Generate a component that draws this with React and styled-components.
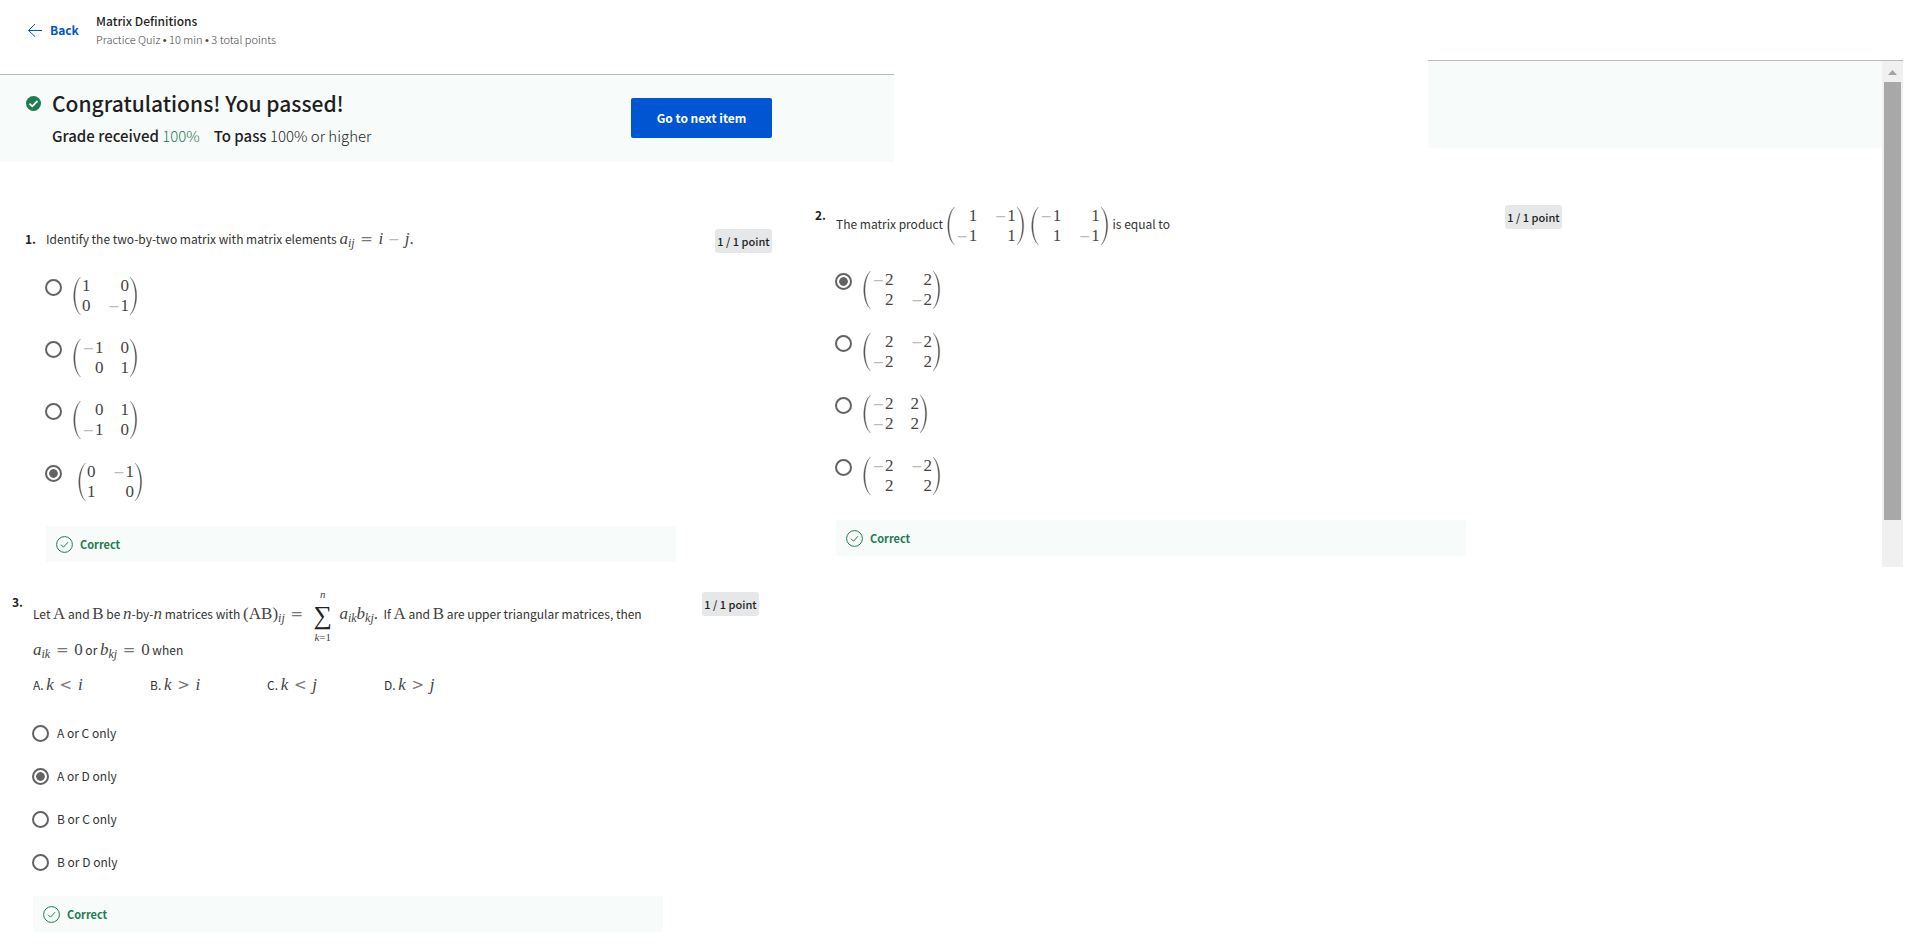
import React from "react";
import styled, { createGlobalStyle } from "styled-components";

const Global = createGlobalStyle`
  *, *::before, *::after { box-sizing: border-box; }
  body { margin: 0; background: #fff; color: #1f1f1f; font-family: "Noto Sans CJK SC", "Noto Sans", sans-serif; font-size: 13px; line-height: 24px; }
  h1, p { margin: 0; font: inherit; }
`;

const Page = styled.div`
  display: flex;
  align-items: flex-start;
  padding-right: 17px;
`;

const Main = styled.main`
  flex: 1;
  min-width: 0;
`;

const TopRow = styled.div`
  display: grid;
  grid-template-columns: 894fr 534fr 454fr;
  align-items: start;
`;

const Header = styled.header`
  display: flex;
  height: 74px;
  padding: 11px 0 0 27px;
`;

const BackLink = styled.a`
  display: flex;
  align-items: center;
  gap: 7px;
  width: 69px;
  height: 37px;
  color: #0056d2;
  font-weight: 700;
  font-size: 12px;
  text-decoration: none;
`;

const QuizTitle = styled.h1`
  font-size: 12px;
  font-weight: 500;
  line-height: 19px;
`;

const QuizMeta = styled.p`
  font-size: 11px;
  font-weight: 300;
  line-height: 18px;
  color: #444;
`;

const Bullet = styled.span`
  font-family: "Liberation Sans", sans-serif;
`;

const Banner = styled.section`
  display: flex;
  align-items: flex-start;
  height: 88px;
  border-top: 1px solid #bababa;
  background: #f7fbfa;
`;

const ResultBanner = styled(Banner)`
  padding: 12px 122px 0 26px;
`;

const TrailingBanner = styled(Banner)`
  grid-column: 3;
  margin-top: 60px;
`;

const BannerText = styled.div`
  flex: 1;
  margin-left: 11px;
`;

const ResultTitle = styled.p`
  font-size: 21px;
  font-weight: 500;
  line-height: 32px;
`;

const GradeLine = styled.p`
  display: flex;
  gap: 14px;
  font-size: 15px;
  font-weight: 300;
  line-height: 34px;
  b { font-weight: 500; }
`;

const Green = styled.span`
  color: #1d7c50;
`;

const ResultIcon = styled.svg`
  flex: none;
  margin-top: 9px;
`;

const NextButton = styled.button`
  width: 141px;
  height: 40px;
  margin-top: 11px;
  padding: 0;
  border: 0;
  border-radius: 2px;
  background: #0056d2;
  color: #fff;
  font: 700 12px/18px "Noto Sans CJK SC", "Noto Sans", sans-serif;
`;

const Questions = styled.div`
  display: grid;
  grid-template-columns: 772fr 790fr 320fr;
  align-items: start;
`;

const LeftColumn = styled.div`
  padding-top: 65px;
`;

const RightColumn = styled.div`
  padding: 41px 0 0 43px;
`;

const QuestionBox = styled.section`
  display: grid;
  grid-template-columns: 21px 1fr 57px;
  margin-left: ${(p) => p.$indent || 0}px;
  & + & { margin: 28px 13px 0 12px; }
`;

const Num = styled.span`
  font-size: 12px;
  font-weight: 700;
`;

const Body = styled.div`
  min-width: 0;
  padding-right: 39px;
  color: #333;
  font-size: 12px;
`;

const Badge = styled.span`
  height: 24px;
  margin-top: 2px;
  border-radius: 3px;
  background: #e5e7e8;
  font-size: 11px;
  font-weight: 500;
  text-align: center;
  white-space: nowrap;
`;

const Line = styled.div`
  height: ${(p) => p.$height || 24}px;
  line-height: ${(p) => p.$height || 24}px;
  white-space: nowrap;
`;

const Choices = styled.div`
  display: grid;
  grid-template-columns: repeat(4, 117px);
  margin-top: 11px;
  white-space: nowrap;
`;

const Options = styled.div`
  display: grid;
  gap: 22px;
  margin-top: 25px;
`;

const Option = styled.label`
  display: flex;
  align-items: flex-start;
  gap: 8px;
  line-height: 21px;
`;

const Radio = styled.input.attrs({ type: "radio" })`
  appearance: none;
  flex: none;
  width: 17px;
  height: 17px;
  margin: 3px 0 0 -1px;
  padding: 2px;
  border: 2px solid #636363;
  border-radius: 50%;
  background-clip: content-box;
  &:checked {
    background-image: radial-gradient(circle, #636363 4px, transparent 5px);
  }
`;

const Feedback = styled.div`
  display: flex;
  align-items: center;
  gap: 7px;
  height: 36px;
  margin-top: 24px;
  padding-left: 10px;
  background: #f7fbfa;
  color: #1d7c50;
  font-size: 11px;
  font-weight: 700;
`;

const Math = styled.span`
  font-family: "Liberation Serif", serif;
  font-size: 17px;
  line-height: 20px;
  color: #444;
  sub { font-size: 12px; line-height: 0; vertical-align: -3px; }
`;

const Minus = styled.span`
  display: inline-block;
  width: 13px;
  text-align: center;
  color: #bbb;
  font: 14px/16px "DejaVu Sans", sans-serif;
`;

const Relation = styled.span`
  display: inline-block;
  width: 24px;
  text-align: center;
  color: #777;
  font: 15px/16px "DejaVu Sans", sans-serif;
`;

const MatrixBox = styled(Math)`
  display: inline-flex;
  align-items: center;
  vertical-align: middle;
  height: 40px;
  margin-left: ${(p) => (p.$lead ? 5 : 0)}px;
`;

const PromptMatrices = styled.span`
  margin: 0 -2px;
`;

const Cells = styled.span`
  display: grid;
  grid-template-columns: auto auto;
  column-gap: 17px;
  text-align: right;
`;

const SumBox = styled(Math)`
  display: inline-flex;
  flex-direction: column;
  align-items: center;
  vertical-align: middle;
  width: 26px;
  margin: -4px 1px;
  font-size: 11px;
  line-height: 13px;
`;

const SumSign = styled.span`
  color: #222;
  font-size: 26px;
  line-height: 30px;
`;

const ScrollTrack = styled.div`
  flex: none;
  width: 21px;
  height: 507px;
  margin-top: 60px;
  padding: 9px 2px 0;
  border-top: 1px solid #bababa;
  background: #f0f0f0;
  svg { display: block; margin: 0 auto 7px; }
`;

const ScrollThumb = styled.div`
  height: 438px;
  background: #a8a8a8;
`;

const Paren = ({ right }) => (
  <svg width="12" height="40" viewBox="0 0 12 40" aria-hidden="true">
    <path
      d={right ? "M1 1C10 9 10 31 1 39C8.200 31 8.200 9 1 1Z" : "M10.500 1C1.500 9 1.500 31 10.500 39C3.300 31 3.300 9 10.500 1Z"}
      fill="#555" stroke="#666" strokeWidth="0.3"
    />
  </svg>
);

const Cell = ({ v }) => (
  <span>{v < 0 && <Minus>−</Minus>}{v < 0 ? -v : v}</span>
);

const Matrix = ({ values, lead }) => (
  <MatrixBox $lead={lead}>
    <Paren />
    <Cells>{values.map((v, i) => <Cell key={i} v={v} />)}</Cells>
    <Paren right />
  </MatrixBox>
);

const CircleCheck = () => (
  <svg width="17" height="17" viewBox="0 0 17 17" fill="none" stroke="#1d7c50" aria-hidden="true">
    <circle cx="8.500" cy="8.500" r="7.900" />
    <path d="M5 8.700L7.500 11.200L12 6.200" />
  </svg>
);

const Question = ({ number, indent, prompt, options, selected }) => (
  <QuestionBox $indent={indent}>
    <Num>{number}.</Num>
    <Body>
      {prompt}
      <Options role="radiogroup" aria-label={`Question ${number}`}>
        {options.map((option, i) => (
          <Option key={i}>
            <Radio name={`question-${number}`} defaultChecked={i === selected} />
            {option}
          </Option>
        ))}
      </Options>
      <Feedback><CircleCheck />Correct</Feedback>
    </Body>
    <Badge>1 / 1 point</Badge>
  </QuestionBox>
);

export default function App() {
  return (
    <>
      <Global />
      <Page>
        <Main>
          <TopRow>
            <div>
              <Header>
                <BackLink href="#">
                  <svg width="16" height="14" viewBox="0 0 16 14" fill="none" stroke="#0056d2" aria-hidden="true">
                    <path d="M15 7.500H1.500M8 1L1.500 7.500L8 13.500" />
                  </svg>
                  Back
                </BackLink>
                <div>
                  <QuizTitle>Matrix Definitions</QuizTitle>
                  <QuizMeta>Practice Quiz <Bullet>•</Bullet> 10 min <Bullet>•</Bullet> 3 total points</QuizMeta>
                </div>
              </Header>
              <ResultBanner>
                <ResultIcon width="15" height="15" viewBox="0 0 15 15" aria-hidden="true">
                  <circle cx="7.500" cy="7.500" r="7.500" fill="#1d7c50" />
                  <path d="M3.500 7.600L6.300 10.300L11.500 5" fill="none" stroke="#fff" strokeWidth="1.800" />
                </ResultIcon>
                <BannerText>
                  <ResultTitle>Congratulations! You passed!</ResultTitle>
                  <GradeLine>
                    <span><b>Grade received</b> <Green>100%</Green></span>
                    <span><b>To pass</b> 100% or higher</span>
                  </GradeLine>
                </BannerText>
                <NextButton type="button">Go to next item</NextButton>
              </ResultBanner>
            </div>
            <TrailingBanner />
          </TopRow>
          <Questions>
            <LeftColumn>
              <Question
                number={1}
                indent={25}
                selected={3}
                prompt={
                  <Line>
                    Identify the two-by-two matrix with matrix elements{" "}
                    <Math><i>a<sub>ij</sub></i><Relation>=</Relation><i>i</i> <Minus>−</Minus> <i>j</i>.</Math>
                  </Line>
                }
                options={[
                  <Matrix values={[1, 0, 0, -1]} />,
                  <Matrix values={[-1, 0, 0, 1]} />,
                  <Matrix values={[0, 1, -1, 0]} />,
                  <Matrix values={[0, -1, 1, 0]} lead />,
                ]}
              />
              <Question
                number={3}
                selected={1}
                prompt={
                  <>
                    <Line $height={48}>
                      Let <Math>A</Math> and <Math>B</Math> be <Math><i>n</i></Math>-by-<Math><i>n</i></Math> matrices with{" "}
                      <Math>(AB)<sub><i>ij</i></sub><Relation>=</Relation></Math>
                      <SumBox><i>n</i><SumSign>∑</SumSign><span><i>k</i>=1</span></SumBox>{" "}
                      <Math><i>a<sub>ik</sub>b<sub>kj</sub></i>.</Math>&nbsp; If <Math>A</Math> and <Math>B</Math> are upper triangular matrices, then
                    </Line>
                    <Line>
                      <Math><i>a<sub>ik</sub></i><Relation>=</Relation>0</Math> or <Math><i>b<sub>kj</sub></i><Relation>=</Relation>0</Math> when
                    </Line>
                    <Choices>
                      <span>A. <Math><i>k</i><Relation>&lt;</Relation><i>i</i></Math></span>
                      <span>B. <Math><i>k</i><Relation>&gt;</Relation><i>i</i></Math></span>
                      <span>C. <Math><i>k</i><Relation>&lt;</Relation><i>j</i></Math></span>
                      <span>D. <Math><i>k</i><Relation>&gt;</Relation><i>j</i></Math></span>
                    </Choices>
                  </>
                }
                options={["A or C only", "A or D only", "B or C only", "B or D only"]}
              />
            </LeftColumn>
            <RightColumn>
              <Question
                number={2}
                selected={0}
                prompt={
                  <Line $height={42}>
                    The matrix product{" "}
                    <PromptMatrices><Matrix values={[1, -1, -1, 1]} /><Matrix values={[-1, 1, 1, -1]} /></PromptMatrices>
                    {" "}is equal to
                  </Line>
                }
                options={[
                  <Matrix values={[-2, 2, 2, -2]} />,
                  <Matrix values={[2, -2, -2, 2]} />,
                  <Matrix values={[-2, 2, -2, 2]} />,
                  <Matrix values={[-2, -2, 2, 2]} />,
                ]}
              />
            </RightColumn>
          </Questions>
        </Main>
        <ScrollTrack aria-hidden="true">
          <svg width="9" height="5" viewBox="0 0 9 5"><path d="M4.500 0L9 5H0Z" fill="#a3a3a3" /></svg>
          <ScrollThumb />
        </ScrollTrack>
      </Page>
    </>
  );
}
